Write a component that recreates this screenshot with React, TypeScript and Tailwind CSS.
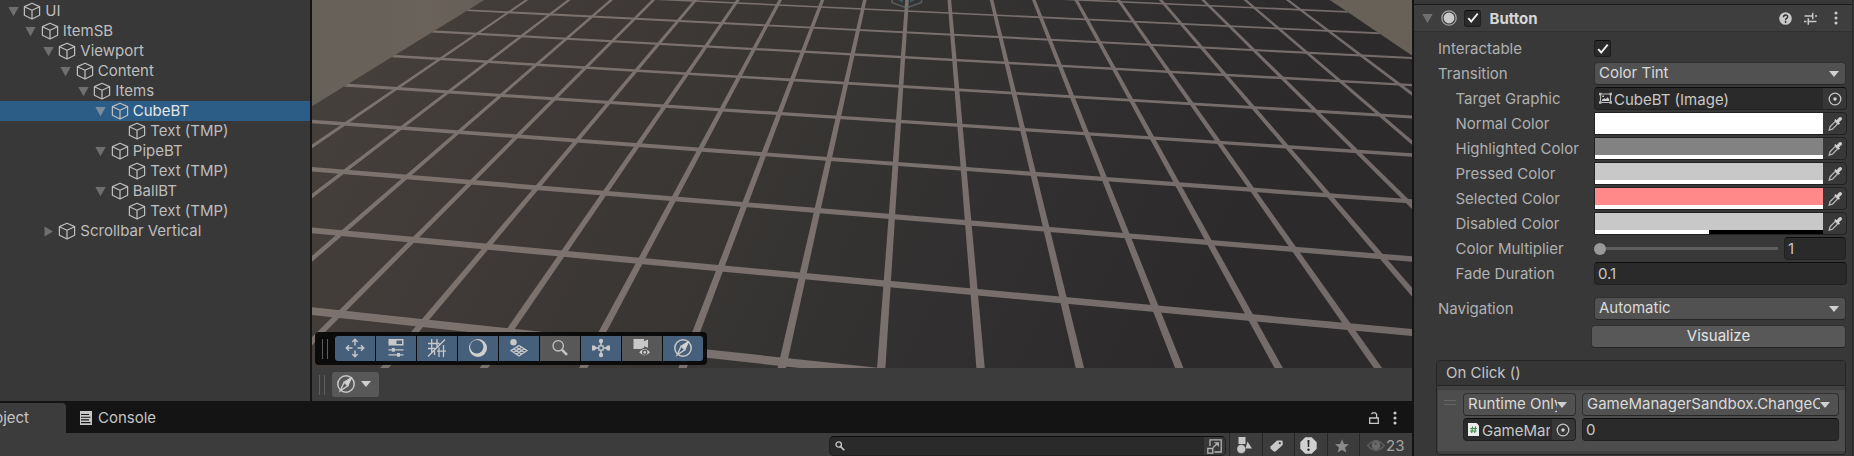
import React from "react";

/* ---------- scene floor: perspective projection of a unit grid ---------- */

const project = (u: number, v: number) => {
  const w = 1 - 0.01009118 * u - 0.09691131 * v;
  const x = (51.50756 * u - 89.7568 * v + 290.0972) / w;
  const y = (2.747071 * u + 26.41869 * v + 119.8372) / w;
  return `${x.toFixed(2)},${y.toFixed(2)}`;
};

const quad = (u0: number, v0: number, u1: number, v1: number) =>
  [project(u0, v0), project(u1, v0), project(u1, v1), project(u0, v1)].join(" ");

const HALF = 0.042;
const FAR = -9;
const NEAR = 5;
const columns = Array.from({ length: 19 }, (_, i) => i + 1);
const rows = Array.from({ length: 14 }, (_, i) => i - 8);

function Scene() {
  return (
    <svg className="block h-[368px] w-[1100px]" viewBox="312 0 1100 368">
      <defs>
        <linearGradient id="floor" gradientUnits="userSpaceOnUse" x1="330" y1="60" x2="1130" y2="460">
          <stop offset="0" stopColor="#45403b" />
          <stop offset="0.28" stopColor="#3e3937" />
          <stop offset="0.55" stopColor="#363432" />
          <stop offset="0.8" stopColor="#302e2f" />
          <stop offset="1" stopColor="#2c2a2b" />
        </linearGradient>
        <linearGradient id="line" gradientUnits="userSpaceOnUse" x1="312" y1="0" x2="1412" y2="368">
          <stop offset="0" stopColor="#7c736d" />
          <stop offset="0.5" stopColor="#7a716f" />
          <stop offset="1" stopColor="#726a68" />
        </linearGradient>
        <linearGradient id="wall" gradientUnits="userSpaceOnUse" x1="312" y1="0" x2="480" y2="0">
          <stop offset="0" stopColor="#666159" />
          <stop offset="0.7" stopColor="#6a625b" />
          <stop offset="1" stopColor="#655e57" />
        </linearGradient>
      </defs>
      <rect x="312" y="0" width="400" height="368" fill="url(#wall)" />
      <rect x="712" y="0" width="700" height="368" fill="#676157" />
      <polygon points={quad(0, FAR, 20, NEAR)} fill="url(#floor)" />
      <g fill="url(#line)">
        {columns.map((u) => (
          <polygon key={u} points={quad(u - HALF, FAR, u + HALF, NEAR)} />
        ))}
        {rows.map((v) => (
          <polygon key={v} points={quad(0, v - HALF, 20, v + HALF)} />
        ))}
      </g>
      <g fill="none" stroke="#62696c" strokeWidth="1.6" opacity="0.75">
        <path d="M892 0v2.5l14.5 5.5L921.500 2.500V0" />
      </g>
      <path d="M898 0h5v2.500zM910 0h5l-5 2.500z" fill="#3f6478" opacity="0.8" />
    </svg>
  );
}

/* ---------- icons ---------- */

function CubeIcon() {
  return (
    <svg className="size-[18px] shrink-0" viewBox="0 0 18 18" fill="none" stroke="#bdbdbd" strokeWidth="1.25" strokeLinejoin="round">
      <path d="M9 1.200 16.600 4.600V13.200L9 17 1.400 13.200V4.600z" />
      <path d="M1.400 4.800 9 8.200l7.600-3.400M9 8.200V17" />
    </svg>
  );
}

function Foldout({ open, lit }: { open: boolean; lit?: boolean }) {
  return (
    <svg className={`size-[11px] shrink-0 ${lit ? "fill-[#7a8d9f]" : "fill-[#6f6f6f]"}`} viewBox="0 0 11 11">
      {open ? <path d="M0.300 1h10.400L5.500 10.200z" /> : <path d="M1.500 0.500v10L10 5.500z" />}
    </svg>
  );
}

function Caret() {
  return (
    <svg className="h-[6px] w-[10px] shrink-0 fill-[#d0d0d0]" viewBox="0 0 10 6">
      <path d="M0 0h10L5 6z" />
    </svg>
  );
}

function Compass() {
  return (
    <svg className="size-[20px]" viewBox="0 0 20 20">
      <circle cx="10" cy="10" r="8.200" fill="none" stroke="#c8c8c8" strokeWidth="1.500" />
      <path d="M15.800 3.200 11.900 11.900 8.100 8.100z" fill="#d2d2d2" stroke="#d2d2d2" />
      <path d="M4.200 16.800 8.100 8.100l3.800 3.800z" fill="none" stroke="#c8c8c8" strokeWidth="1.400" />
    </svg>
  );
}

function EyeDropper() {
  return (
    <svg className="size-[15px]" viewBox="0 0 15 15">
      <path d="M1.200 14l0.900-3.300L7.300 5.400 9.700 7.800 4.400 13.100z" fill="none" stroke="#b4b4b4" strokeWidth="1.300" />
      <path d="M6.300 4.300 7.500 3.100 8.700 4.200 11 1.500Q12.300 0.400 13.500 1.500T13.600 4L10.900 6.300 12 7.400 10.800 8.700z" fill="#d0d0d0" />
    </svg>
  );
}

function Picker() {
  return (
    <svg className="size-[14px]" viewBox="0 0 14 14">
      <circle cx="7" cy="7" r="5.800" fill="none" stroke="#c4c4c4" strokeWidth="1.300" />
      <circle cx="7" cy="7" r="1.700" fill="#d0d0d0" />
    </svg>
  );
}

function Dots() {
  return (
    <svg className="h-[14px] w-[4px]" viewBox="0 0 4 14" fill="#c8c8c8">
      <circle cx="2" cy="2" r="1.550" />
      <circle cx="2" cy="7" r="1.550" />
      <circle cx="2" cy="12" r="1.550" />
    </svg>
  );
}

const toolIcons: { on: boolean; icon: React.ReactNode }[] = [
  {
    on: true,
    icon: (
      <g fill="none" stroke="#c8c8c8" strokeWidth="1.400">
        <path d="M10 7.500V1.500M7.300 4 10 1.300 12.700 4M10 12.500v6M7.300 16l2.700 2.700 2.700-2.700M7.500 10h-6M4 7.300 1.300 10 4 12.700M12.500 10h6M16 7.300l2.700 2.700-2.700 2.700" />
      </g>
    ),
  },
  {
    on: true,
    icon: (
      <g fill="#c8c8c8">
        <path d="M2.500 1h15v6.500h-15z" />
        <path d="M10.500 2.500h5.500v3.500h-5.500z" fill="#46607c" />
        <path d="M2.500 11.200h15v1.400h-15zM2.500 16.200h15v1.400h-15z" />
        <path d="M5.800 10h3v3.800h-3zM11 15h3v3.800h-3z" />
      </g>
    ),
  },
  {
    on: true,
    icon: (
      <g fill="none" stroke="#c8c8c8" strokeWidth="1.300">
        <path d="M1 18.500 18 1.500M1 5.500h11.500M1 10.500h7.500M4.700 1v13.500M10 1v9M16.500 7v12M12 9.500v9.500M7.500 13v4M10 13.200h9" />
      </g>
    ),
  },
  {
    on: true,
    icon: (
      <g>
        <circle cx="10" cy="10" r="9" fill="#d0d0d0" />
        <circle cx="8.800" cy="8.800" r="6.700" fill="#46607c" />
      </g>
    ),
  },
  {
    on: true,
    icon: (
      <g>
        <circle cx="4.500" cy="4.200" r="3.200" fill="#c8c8c8" />
        <g fill="none" stroke="#c8c8c8" strokeWidth="1.300">
          <path d="M2 12.500 10 7.500l8 5-8 5.500zM4.700 10.800l8 5.300M7.300 9.200l8 5.100M15.300 10.800l-8 5.300M12.700 9.200l-8 5.100" />
        </g>
      </g>
    ),
  },
  {
    on: false,
    icon: (
      <g fill="none" stroke="#c4c4c4">
        <circle cx="8.200" cy="7.800" r="5.200" strokeWidth="1.300" />
        <path d="M12 11.800l5 5" strokeWidth="2.600" />
      </g>
    ),
  },
  {
    on: true,
    icon: (
      <g>
        <g fill="#c8c8c8">
          <path d="M9.200 2h1.600v16H9.200zM2 9.200h16v1.600H2z" />
          <ellipse cx="10" cy="3" rx="2.200" ry="2.200" />
          <ellipse cx="10" cy="17" rx="2.200" ry="2.200" />
          <path d="M1 7.500h2.500L6 10l-2.500 2.500H1zM19 7.500h-2.500L14 10l2.500 2.500H19z" />
        </g>
        <rect x="7.900" y="7.900" width="4.200" height="4.200" fill="#46607c" stroke="#c8c8c8" strokeWidth="1.300" />
      </g>
    ),
  },
  {
    on: false,
    icon: (
      <g>
        <path d="M1.500 1h10.500v2.300l4-1.800v8.300l-4-1.600V11H1.500z" fill="#c8c8c8" />
        <path d="M6.500 14.500Q12.500 6.500 18.800 14.500 12.500 21.500 6.500 14.500z" fill="#d0d0d0" stroke="#585858" strokeWidth="1.200" />
        <circle cx="12.700" cy="14.300" r="2.700" fill="#585858" />
        <circle cx="12.700" cy="14.300" r="1.400" fill="#c8c8c8" />
      </g>
    ),
  },
];

/* ---------- hierarchy ---------- */

const tree: [string, string, "open" | "closed" | "leaf"][] = [
  ["UI", "pl-[7.500px]", "open"],
  ["ItemSB", "pl-[25px]", "open"],
  ["Viewport", "pl-[42.500px]", "open"],
  ["Content", "pl-[60px]", "open"],
  ["Items", "pl-[77.500px]", "open"],
  ["CubeBT", "pl-[95px]", "open"],
  ["Text (TMP)", "pl-[112.500px]", "leaf"],
  ["PipeBT", "pl-[95px]", "open"],
  ["Text (TMP)", "pl-[112.500px]", "leaf"],
  ["BallBT", "pl-[95px]", "open"],
  ["Text (TMP)", "pl-[112.500px]", "leaf"],
  ["Scrollbar Vertical", "pl-[42.500px]", "closed"],
];

function Hierarchy() {
  return (
    <div className="h-full w-[310px] shrink-0 bg-[#383838] pt-px">
      {tree.map(([label, pad, state], i) => {
        const selected = label === "CubeBT";
        return (
          <div key={i} className={`flex h-5 items-center ${pad} ${selected ? "bg-[#2c5d87] text-[#e6e6e6]" : "text-[#bebebe]"}`}>
            {state === "leaf" ? <span className="w-[11px]" /> : <Foldout open={state === "open"} lit={selected} />}
            <span className="ml-[4.500px] flex">
              <CubeIcon />
            </span>
            <span className="ml-[4.300px] pb-px">{label}</span>
          </div>
        );
      })}
    </div>
  );
}

function Grip({ tone }: { tone: string }) {
  return (
    <div className={`flex h-5 w-[6px] shrink-0 justify-between ${tone}`}>
      <span className="w-px bg-current" />
      <span className="w-px bg-current" />
    </div>
  );
}

function SceneView() {
  return (
    <div className="flex h-full w-[1100px] shrink-0 flex-col bg-[#3c3c3c]">
      <div className="relative h-[368px]">
        <Scene />
        <div className="absolute left-[3px] top-[332px] flex h-[33px] items-center rounded-[4px] bg-[#080808]/95 pl-[7px] pr-1">
          <Grip tone="text-[#5c5c5c]" />
          <div className="ml-[7px] flex gap-px overflow-hidden rounded-[3px]">
            {toolIcons.map(({ on, icon }, i) => (
              <div key={i} className={`flex h-[25px] w-10 items-start justify-center pt-[2px] ${on ? "bg-[#46607c]" : "bg-[#585858]"}`}>
                <svg className="size-5" viewBox="0 0 20 20">
                  {icon}
                </svg>
              </div>
            ))}
            <div className="flex h-[25px] w-10 items-start justify-center bg-[#46607c] pt-[2px]">
              <Compass />
            </div>
          </div>
        </div>
      </div>
      <div className="flex h-[33px] items-center pl-[7px]">
        <Grip tone="text-[#5e5e5e]" />
        <div className="ml-[7px] flex h-[25px] w-[47px] items-center gap-[5px] rounded-[3px] bg-[#585858] pb-px pl-1">
          <Compass />
          <Caret />
        </div>
      </div>
    </div>
  );
}

/* ---------- project panel ---------- */

function ProjectPanel() {
  return (
    <div className="flex h-[55px] flex-col">
      <div className="flex h-8 shrink-0 items-end bg-[#141414] text-[#c4c4c4]">
        <div className="flex h-[30px] w-[66px] items-center justify-end overflow-hidden rounded-tr-[4px] bg-[#3c3c3c] pr-[37px]">
          <span>Project</span>
        </div>
        <div className="flex h-[30px] items-center pl-[14px]">
          <svg className="h-[14px] w-3" viewBox="0 0 12 14">
            <path d="M0 0h12v14H0z" fill="#c8c8c8" />
            <path d="M1 3.500h8M1 6.200h9.500M1 8.900h8M1 11.600h9.500" stroke="#161616" strokeWidth="1.100" />
          </svg>
          <span className="ml-[6px]">Console</span>
        </div>
        <div className="ml-auto flex h-[30px] items-center pr-[15px]">
          <svg className="h-3 w-[10px]" viewBox="0 0 10 12" fill="none" stroke="#c8c8c8" strokeWidth="1.300">
            <path d="M0.700 6h8.600v5.300H0.700zM7.600 6V2.500L6.500 0.900H3.500L2.500 2.200" />
          </svg>
          <span className="ml-[14px]">
            <Dots />
          </span>
        </div>
      </div>
      <div className="flex h-[23px] overflow-hidden bg-[#3c3c3c] pl-[829px]">
        <div className="mt-[3px] flex h-5 w-[397px] items-center overflow-hidden rounded-[5px] border border-[#202020] border-t-[#0d0d0d] bg-[#2a2a2a]">
          <svg className="ml-[5px] h-[10px] w-[10px]" viewBox="0 0 10 10" fill="none" stroke="#c8c8c8">
            <circle cx="3.700" cy="3.500" r="2.700" strokeWidth="1.300" />
            <path d="M5.600 5.600 9.300 9.300" strokeWidth="1.600" />
          </svg>
          <div className="ml-auto flex h-full w-[21px] items-center justify-center bg-[#383838]">
            <svg className="size-[15px]" viewBox="0 0 15 15" fill="none" stroke="#b4b4b4" strokeWidth="1.300">
              <path d="M3 7V0.800h11.200V13H7.500M0.800 9.500h5v4.700h-5zM6 8.500 11 4M7.500 3.800H11.300V7.500" />
            </svg>
          </div>
        </div>
        <div className="ml-[3px] flex">
          <div className="flex w-[33px] items-start border-l border-[#262626] pl-[7px] pt-1">
            <svg className="h-[17px] w-[15px]" viewBox="0 0 15 17" fill="#c8c8c8">
              <path d="M1.500 0H8.500V7H1.500zM10.500 4.500 15 11.500H8.500z" />
              <circle cx="4.300" cy="12" r="4.500" stroke="#3c3c3c" strokeWidth="0.600" />
            </svg>
          </div>
          <div className="flex w-8 items-start border-l border-[#262626] pl-[7px] pt-[7px]">
            <svg className="h-[12px] w-[13px]" viewBox="0 0 13 12">
              <path d="M7 0.500h4.500q1.200 0 1.200 1.200V5L5.500 11.600H3.800L0.500 8.500V6.500z" fill="#c8c8c8" />
              <circle cx="9.800" cy="3.200" r="1.100" fill="#3c3c3c" />
            </svg>
          </div>
          <div className="flex w-[33px] items-start border-l border-[#262626] pl-[5px] pt-[4px]">
            <svg className="size-[17px]" viewBox="0 0 17 17">
              <path d="M5.300 0.300h6.400l5 5v6.400l-5 5H5.300l-5-5V5.300z" fill="#d0d0d0" />
              <path d="M7.500 3h2l-0.300 7H7.800z" fill="#2c2c2c" />
              <circle cx="8.500" cy="12.800" r="1.200" fill="#2c2c2c" />
            </svg>
          </div>
          <div className="flex w-8 items-start border-l border-[#262626] pl-[7px] pt-[6px]">
            <svg className="size-[14px]" viewBox="0 0 14 14">
              <path d="M7 0.200 9 4.900l4.900 0.400-3.800 3.300 1.200 5L7 10.900l-4.300 2.700 1.200-5L0.100 5.300 5 4.900z" fill="#8a8a8a" />
            </svg>
          </div>
          <div className="flex w-[53px] items-start border-l border-[#262626] pl-[7px]">
            <svg className="mt-[7px] h-[11px] w-[18px]" viewBox="0 0 18 11">
              <path d="M0.700 5.500Q9-4.500 17.300 5.500 9 15.500 0.700 5.500z" fill="none" stroke="#606060" strokeWidth="1.300" />
              <circle cx="9" cy="5.300" r="4.400" fill="#6a6a6a" />
              <circle cx="8.300" cy="3.800" r="1.300" fill="#505050" />
            </svg>
            <span className="ml-px mt-[2px] text-[15px] leading-[22px] text-[#a4a4a4]">23</span>
          </div>
        </div>
      </div>
    </div>
  );
}

/* ---------- inspector ---------- */

function Check() {
  return (
    <span className="flex size-[17px] shrink-0 items-center justify-center rounded-[3px] border border-[#1e1e1e] border-t-[#0d0d0d] bg-[#2a2a2a]">
      <svg className="size-[12px]" viewBox="0 0 12 12" fill="none" stroke="#f0f0f0" strokeWidth="1.900">
        <path d="M1.200 6.200 4.200 9.500 10.700 1.700" />
      </svg>
    </span>
  );
}

function Row({ label, nested, children }: { label: string; nested?: boolean; children: React.ReactNode }) {
  return (
    <div className="flex h-[25px] items-center">
      <span className={`w-[156px] shrink-0 whitespace-nowrap text-[#b0b0b0] ${nested ? "pl-[17.500px]" : ""}`}>{label}</span>
      {children}
    </div>
  );
}

function Dropdown({ value, size }: { value: string; size: string }) {
  return (
    <div className={`flex h-[23px] items-center rounded-[4px] border border-[#303030] border-b-[#262626] bg-[#515151] text-[#dadada] ${size}`}>
      <span className="min-w-0 flex-1 overflow-hidden whitespace-nowrap pb-px">{value}</span>
      <Caret />
    </div>
  );
}

function ColorField({ fill, alpha }: { fill: string; alpha: string }) {
  return (
    <div className="flex h-[23px] w-[253px] overflow-hidden rounded-r-[4px] border border-[#212121] bg-[#383838]">
      <div className={`flex w-[228px] flex-col ${fill}`}>
        <div className="flex-1" />
        <div className="h-1 bg-black">
          <div className={`h-full bg-white ${alpha}`} />
        </div>
      </div>
      <div className="flex flex-1 items-center justify-center pl-px">
        <EyeDropper />
      </div>
    </div>
  );
}

const field = "border border-[#212121] border-t-[#0d0d0d] bg-[#2a2a2a] rounded-[4px] text-[#c8c8c8]";

function Inspector() {
  return (
    <div className="flex h-full w-[438px] shrink-0 flex-col bg-[#383838]">
      <div className="h-1 shrink-0" />
      <div className="flex h-7 shrink-0 items-center border-b border-t border-b-[#303030] border-t-[#1a1a1a] bg-[#3e3e3e] pl-2 pr-[14px]">
        <Foldout open />
        <svg className="ml-2 size-4" viewBox="0 0 16 16">
          <circle cx="8" cy="8" r="7.200" fill="none" stroke="#a0a0a0" strokeWidth="1.300" />
          <circle cx="8" cy="8" r="5.400" fill="#c8c8c8" />
        </svg>
        <span className="ml-[7px]">
          <Check />
        </span>
        <span className="ml-[8.500px] pt-px font-bold text-[#d6d6d6]">Button</span>
        <svg className="ml-auto size-[13px]" viewBox="0 0 13 13">
          <circle cx="6.500" cy="6.500" r="6.300" fill="#c8c8c8" />
          <path d="M4.500 5.200Q4.500 3 6.600 3T8.600 5Q8.600 6 7.300 6.600 6.600 7 6.600 8.200" fill="none" stroke="#303030" strokeWidth="1.400" />
          <circle cx="6.600" cy="10" r="0.900" fill="#303030" />
        </svg>
        <svg className="ml-3 size-[13px]" viewBox="0 0 13 13" fill="none" stroke="#c8c8c8" strokeWidth="1.500">
          <path d="M0.500 4H9.500M8.700 0.800v6.400M11 4h2M0 9.500h2.500M4.300 6.300v6.400M4.500 9.500H12.500" />
        </svg>
        <span className="ml-[17px]">
          <Dots />
        </span>
      </div>
      <div className="flex flex-col pl-6 pt-1">
        <Row label="Interactable">
          <Check />
        </Row>
        <Row label="Transition">
          <Dropdown value="Color Tint" size="w-[252px] pl-1 pr-[6px]" />
        </Row>
        <Row label="Target Graphic" nested>
          <div className={`flex h-[23px] w-[253px] items-center overflow-hidden ${field}`}>
            <svg className="ml-1 size-[13px] shrink-0" viewBox="0 0 13 13" fill="none" stroke="#b8b8b8" strokeWidth="1.200">
              <path d="M1.500 2h10v8.500h-10z" />
              <path d="M0 0.800h2.500v2.500H0zM10.500 0.800H13v2.500h-2.500zM0 9.300h2.500v2.500H0zM10.500 9.300H13v2.500h-2.500z" fill="#b8b8b8" stroke="none" />
              <path d="M3 9V7.800L5.200 6.200l1.600 0.800 1.900-1.800 1.400 2V9z" fill="#d0d0d0" stroke="none" />
              <path d="M3.300 3.600h1.700v1.500H3.300z" fill="#d0d0d0" stroke="none" />
            </svg>
            <span className="ml-[2px] pt-[2px]">CubeBT (Image)</span>
            <span className="ml-auto flex h-full w-[23px] items-center justify-center bg-[#373737]">
              <Picker />
            </span>
          </div>
        </Row>
        <Row label="Normal Color" nested>
          <ColorField fill="bg-white" alpha="w-full" />
        </Row>
        <Row label="Highlighted Color" nested>
          <ColorField fill="bg-[#828282]" alpha="w-full" />
        </Row>
        <Row label="Pressed Color" nested>
          <ColorField fill="bg-[#c8c8c8]" alpha="w-full" />
        </Row>
        <Row label="Selected Color" nested>
          <ColorField fill="bg-[#ff8888]" alpha="w-full" />
        </Row>
        <Row label="Disabled Color" nested>
          <ColorField fill="bg-[#c8c8c8]" alpha="w-1/2" />
        </Row>
        <Row label="Color Multiplier" nested>
          <div className="flex w-[184px] items-center">
            <span className="size-3 rounded-full bg-[#999999]" />
            <span className="h-[3px] flex-1 bg-[#5e5e5e]" />
          </div>
          <div className={`ml-[6px] flex h-[23px] w-[62px] items-center pl-[3px] pt-px ${field}`}>1</div>
        </Row>
        <Row label="Fade Duration" nested>
          <div className={`flex h-[23px] w-[253px] items-center pl-[3px] pt-px ${field}`}>0.1</div>
        </Row>
        <div className="h-[10px]" />
        <Row label="Navigation">
          <Dropdown value="Automatic" size="w-[252px] pl-1 pr-[6px]" />
        </Row>
        <div className="ml-[153px] mt-[4px] flex h-[23px] w-[255px] items-center justify-center rounded-[4px] border border-[#303030] border-b-[#242424] bg-[#585858] pb-px text-[#e4e4e4]">
          Visualize
        </div>
      </div>
      <div className="ml-[22px] mt-3 flex h-[95px] w-[410px] shrink-0 flex-col rounded-[4px] border border-[#242424] bg-[#414141]">
        <div className="flex h-[25px] shrink-0 items-center rounded-t-[3px] border-b border-[#242424] bg-[#353535] pl-[9px] text-[#c4c4c4]">On Click ()</div>
        <div className="ml-px mt-1 flex h-[61px] bg-[#4d4d4d] pl-[6px] pt-[3px]">
          <div className="mr-[7px] mt-[7px] flex h-[5px] w-3 flex-col justify-between">
            <span className="h-px bg-[#666666]" />
            <span className="h-px bg-[#666666]" />
          </div>
          <div className="flex flex-col gap-[2px]">
            <Dropdown value="Runtime Only" size="w-[113px] pl-1 pr-2" />
            <div className={`flex h-[23px] w-[113px] items-center overflow-hidden ${field}`}>
              <svg className="ml-1 h-[13px] w-[11px] shrink-0" viewBox="0 0 11 13">
                <path d="M0 0h8.500L11 2.500V13H0z" fill="#ececec" />
                <path d="M4.600 3.500 3.700 10M7.600 3.500 6.700 10M2.300 5.500h6.500M2 8h6.500" stroke="#3f8a4d" strokeWidth="1.200" />
              </svg>
              <span className="ml-[3px] w-[68px] overflow-hidden whitespace-nowrap pt-[2px]">GameMar</span>
              <span className="ml-auto flex h-full w-[23px] shrink-0 items-center justify-center bg-[#373737] pr-px">
                <Picker />
              </span>
            </div>
          </div>
          <div className="ml-[6px] flex flex-col gap-[2px]">
            <Dropdown value="GameManagerSandbox.ChangeO" size="w-[257px] pl-1 pr-2" />
            <div className={`flex h-[23px] w-[257px] items-center pl-[3px] pt-px ${field}`}>0</div>
          </div>
        </div>
      </div>
    </div>
  );
}

export default function App() {
  return (
    <div className="flex h-[456px] w-[1854px] overflow-hidden bg-[#141414] font-['Inter',sans-serif] text-[15px] leading-5">
      <div className="flex w-[1412px] shrink-0 flex-col">
        <div className="flex h-[401px] shrink-0 gap-[2px] bg-[#141414]">
          <Hierarchy />
          <SceneView />
        </div>
        <ProjectPanel />
      </div>
      <div className="w-[2px] shrink-0 bg-[#141414]" />
      <Inspector />
      <div className="w-[2px] shrink-0 border-l border-[#2a2a2a] bg-[#353535]" />
    </div>
  );
}
